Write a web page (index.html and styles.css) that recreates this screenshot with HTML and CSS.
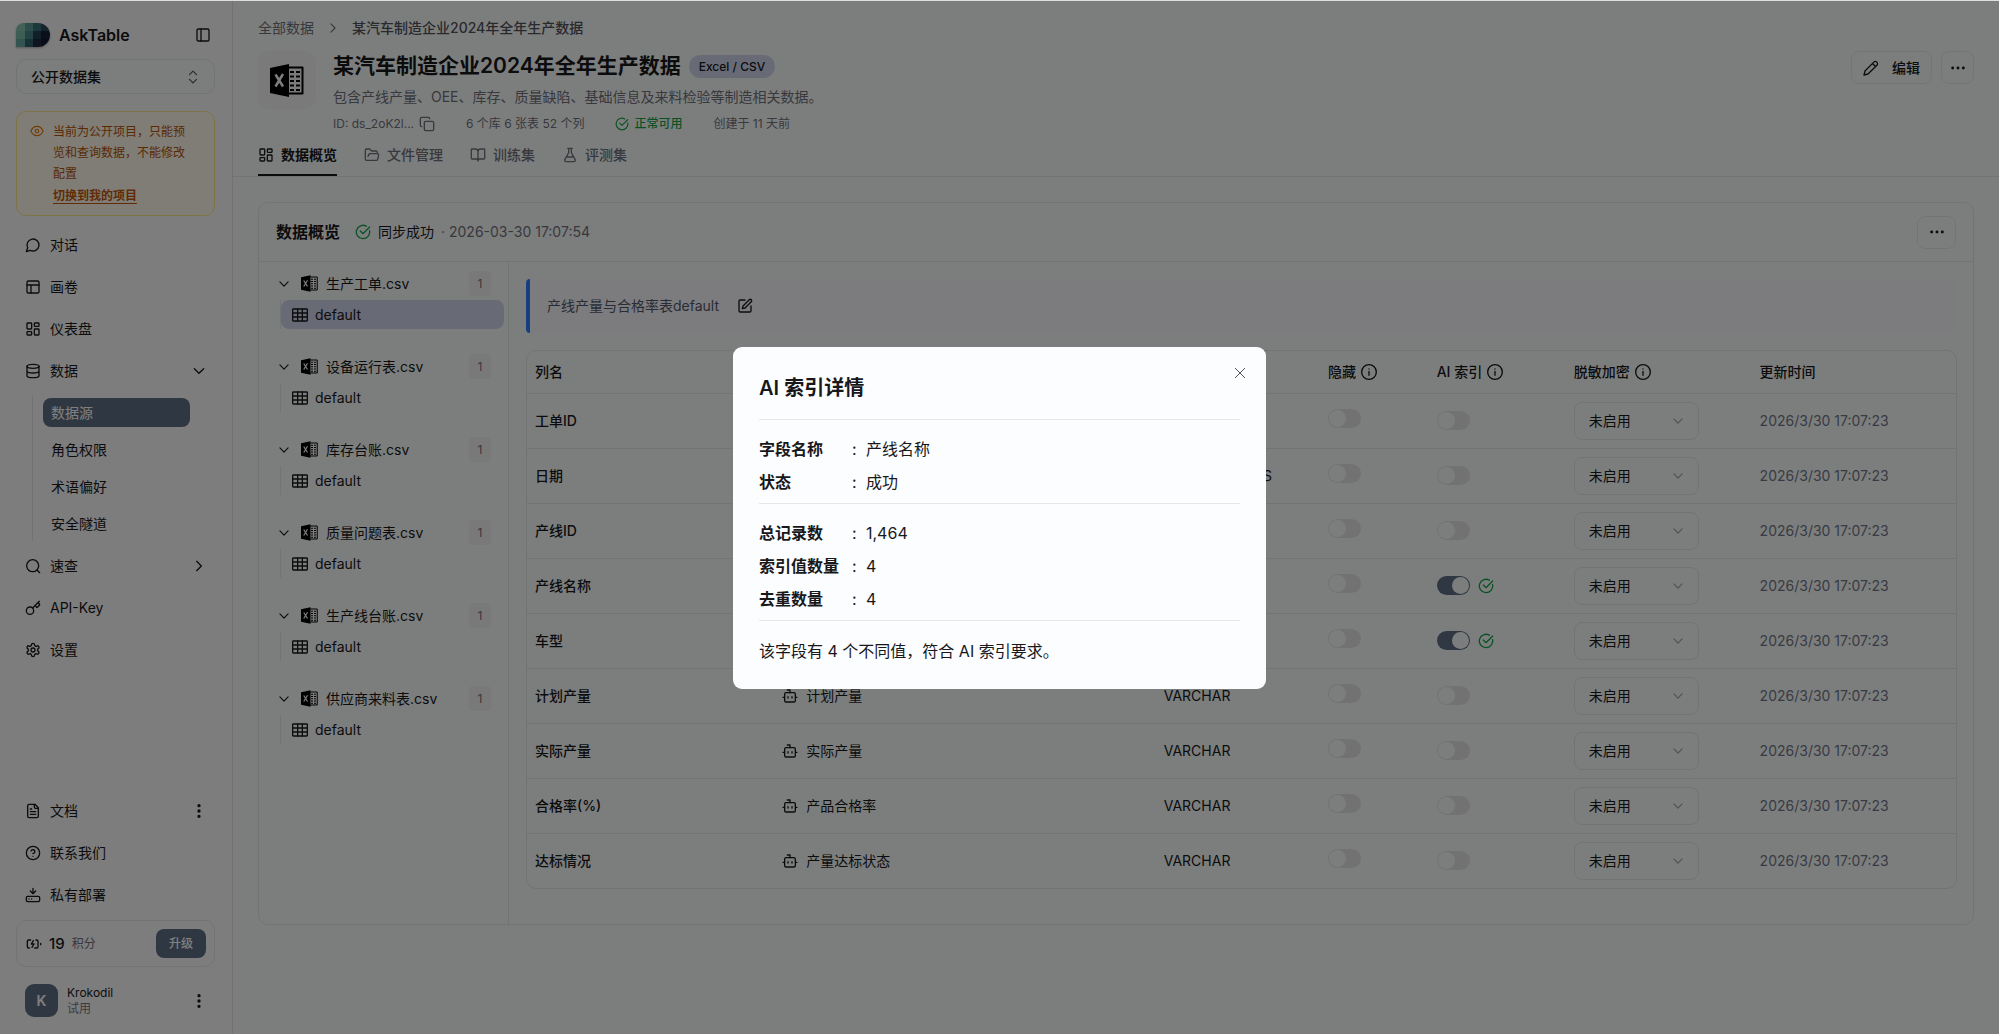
FILE: index.html
```html
<!DOCTYPE html>
<html lang="zh-CN">
<head>
  <meta charset="UTF-8" />
  <meta name="viewport" content="width=device-width, initial-scale=1.0"/>
  <title>AskTable</title>
  <link rel="stylesheet" href="styles.css">
</head>
<body>
  <!-- icons -->
  <svg class="sprite" aria-hidden="true">
    <symbol id="i-panel" viewBox="0 0 24 24"><rect x="3" y="3" width="18" height="18" rx="2"/><path d="M9 3v18"/></symbol>
    <symbol id="i-updown" viewBox="0 0 24 24"><path d="m6 8 6-6 6 6M6 16l6 6 6-6"/></symbol>
    <symbol id="i-eye" viewBox="0 0 24 24"><path d="M1.500 12s3.500-8 10.500-8 10.500 8 10.500 8-3.500 8-10.500 8S1.500 12 1.500 12z"/><circle cx="12" cy="12" r="3"/></symbol>
    <symbol id="i-chat" viewBox="0 0 24 24"><path d="M7.900 20A9 9 0 1 0 4 16.100L2 22z"/></symbol>
    <symbol id="i-canvas" viewBox="0 0 24 24"><rect x="3" y="3" width="18" height="18" rx="2"/><path d="M3 9h18M9 21V9"/></symbol>
    <symbol id="i-dash" viewBox="0 0 24 24"><rect x="3" y="3" width="7" height="9" rx="1"/><rect x="14" y="3" width="7" height="5" rx="1"/><rect x="14" y="12" width="7" height="9" rx="1"/><rect x="3" y="16" width="7" height="5" rx="1"/></symbol>
    <symbol id="i-db" viewBox="0 0 24 24"><ellipse cx="12" cy="5" rx="9" ry="3"/><path d="M3 5v14a9 3 0 0 0 18 0V5M3 12a9 3 0 0 0 18 0"/></symbol>
    <symbol id="i-search" viewBox="0 0 24 24"><circle cx="11.500" cy="11.500" r="9"/><path d="m22 22-4-4"/></symbol>
    <symbol id="i-key" viewBox="0 0 24 24"><circle cx="7.500" cy="16" r="5.500"/><path d="m11.500 12 10-10M15.500 8l1.500 2.500c.6.600 1.400.6 2 0l2.500-2.500c.6-.6.600-1.400 0-2L19.500 4"/></symbol>
    <symbol id="i-gear" viewBox="0 0 24 24"><path d="M12.220 2h-.44a2 2 0 0 0-2 2v.18a2 2 0 0 1-1 1.730l-.43.250a2 2 0 0 1-2 0l-.15-.08a2 2 0 0 0-2.730.730l-.22.380a2 2 0 0 0 .730 2.730l.150.100a2 2 0 0 1 1 1.720v.510a2 2 0 0 1-1 1.740l-.15.090a2 2 0 0 0-.73 2.730l.220.380a2 2 0 0 0 2.730.730l.150-.08a2 2 0 0 1 2 0l.430.250a2 2 0 0 1 1 1.730V20a2 2 0 0 0 2 2h.440a2 2 0 0 0 2-2v-.18a2 2 0 0 1 1-1.730l.430-.25a2 2 0 0 1 2 0l.150.080a2 2 0 0 0 2.730-.73l.220-.39a2 2 0 0 0-.73-2.730l-.15-.08a2 2 0 0 1-1-1.740v-.5a2 2 0 0 1 1-1.740l.150-.09a2 2 0 0 0 .730-2.730l-.22-.38a2 2 0 0 0-2.730-.73l-.15.080a2 2 0 0 1-2 0l-.43-.25a2 2 0 0 1-1-1.730V4a2 2 0 0 0-2-2z"/><circle cx="12" cy="12" r="3"/></symbol>
    <symbol id="i-doc" viewBox="0 0 24 24"><path d="M15 2H6a2 2 0 0 0-2 2v16a2 2 0 0 0 2 2h12a2 2 0 0 0 2-2V7z"/><path d="M14 2v4a2 2 0 0 0 2 2h4M10 9H8M16 13H8M16 17H8"/></symbol>
    <symbol id="i-help" viewBox="0 0 24 24"><circle cx="12" cy="12" r="10"/><path d="M9.100 9a3 3 0 0 1 5.800 1c0 2-3 3-3 3M12 17h.01"/></symbol>
    <symbol id="i-deploy" viewBox="0 0 24 24"><path d="M12 2v8m4-4-4 4-4-4"/><rect x="2" y="14" width="20" height="8" rx="2"/><path d="M6 18h.01M10 18h.01"/></symbol>
    <symbol id="i-battery" viewBox="0 0 24 24"><path d="m11 7-3 5h4l-3 5M14.900 6H16a2 2 0 0 1 2 2v8a2 2 0 0 1-2 2h-2.900M22 11v2M5.100 18H4a2 2 0 0 1-2-2V8a2 2 0 0 1 2-2h2.900"/></symbol>
    <symbol id="i-down" viewBox="0 0 24 24"><path d="m5 8.500 7 7 7-7"/></symbol>
    <symbol id="i-right" viewBox="0 0 24 24"><path d="m8.500 5 7 7-7 7"/></symbol>
    <symbol id="i-vdots" viewBox="0 0 24 24"><g fill="currentColor"><circle cx="12" cy="4" r="1.500"/><circle cx="12" cy="12" r="1.500"/><circle cx="12" cy="20" r="1.500"/></g></symbol>
    <symbol id="i-hdots" viewBox="0 0 24 24"><g fill="currentColor"><circle cx="4" cy="12" r="1.200"/><circle cx="12" cy="12" r="1.200"/><circle cx="20" cy="12" r="1.200"/></g></symbol>
    <symbol id="i-copy" viewBox="0 0 24 24"><rect x="8" y="8" width="14" height="14" rx="2"/><path d="M4 16c-1.100 0-2-.9-2-2V4c0-1.100.900-2 2-2h10c1.100 0 2 .900 2 2"/></symbol>
    <symbol id="i-ok" viewBox="0 0 24 24"><path d="M21.800 10A10 10 0 1 1 17 3.300"/><path d="m8 10.500 4 4L22 4.500"/></symbol>
    <symbol id="i-folder" viewBox="0 0 24 24"><path d="m6 14 1.450-2.900A2 2 0 0 1 9.240 10H20a2 2 0 0 1 1.940 2.500l-1.550 6a2 2 0 0 1-1.940 1.500H4a2 2 0 0 1-2-2V5c0-1.100.900-2 2-2h3.930a2 2 0 0 1 1.660.900l.820 1.200a2 2 0 0 0 1.660.900H18a2 2 0 0 1 2 2v2"/></symbol>
    <symbol id="i-book" viewBox="0 0 24 24"><path d="M12 7v14M3 18a1 1 0 0 1-1-1V4a1 1 0 0 1 1-1h5a4 4 0 0 1 4 4 4 4 0 0 1 4-4h5a1 1 0 0 1 1 1v13a1 1 0 0 1-1 1h-6a3 3 0 0 0-3 3 3 3 0 0 0-3-3z"/></symbol>
    <symbol id="i-flask" viewBox="0 0 24 24"><path d="M14 2v6a2 2 0 0 0 .245.960l5.510 10.080A2 2 0 0 1 18 22H6a2 2 0 0 1-1.755-2.960l5.510-10.080A2 2 0 0 0 10 8V2M6.500 15h11M8.500 2h7"/></symbol>
    <symbol id="i-pencil" viewBox="0 0 24 24"><path d="M3 16.500 16.200 3.200a3 3 0 0 1 4.600 4.600L7.500 21 1.500 22.500zM14.500 5.500l4 4"/></symbol>
    <symbol id="i-edit" viewBox="0 0 24 24"><path d="M12 3H5a2 2 0 0 0-2 2v14a2 2 0 0 0 2 2h14a2 2 0 0 0 2-2v-7"/><path d="M18.400 2.600a2 2 0 0 1 3 3L12 15l-4 1 1-4z"/></symbol>
    <symbol id="i-table" viewBox="0 0 24 24"><rect x="1" y="3" width="22" height="18" rx="1"/><path d="M1 9h22M1 15h22M8.500 3v18M15.500 3v18"/></symbol>
    <symbol id="i-info" viewBox="0 0 24 24"><circle cx="12" cy="12" r="11"/><path d="M12 17v-6M12 7.500h.01"/></symbol>
    <symbol id="i-bot" viewBox="0 0 24 24"><path d="M12 7V3H8"/><rect x="4" y="7" width="16" height="14" rx="2"/><path d="M1.500 14h2M20.500 14h2M15 13v2M9 13v2"/></symbol>
    <symbol id="i-close" viewBox="0 0 24 24"><path d="M5 5l14 14M19 5 5 19"/></symbol>
    <symbol id="i-excel" viewBox="0 0 34 33"><path d="M0 4 19 0v33L0 29z" fill="currentColor" stroke="none"/><path d="M19 3.500h13.500v26H19" stroke-width="2"/><path d="M20 8h4M26 8h4M20 12.500h4M26 12.500h4M20 17h4M26 17h4M20 21.500h4M26 21.500h4M20 26h4M26 26h4" stroke-width="2" stroke-linecap="butt"/><path class="x" d="m5.500 10.500 7.500 12M13 10l-7.500 12.500" stroke-width="2.500" stroke-linecap="butt"/></symbol>
  </svg>

  <div class="app">
    <aside class="sidebar">
      <div class="brand">
        <svg class="logo" viewBox="0 0 34 24" aria-hidden="true">
          <clipPath id="logo-clip"><path d="M8 0h14a12 12 0 0 1 0 24H0V8a8 8 0 0 1 8-8z"/></clipPath>
          <g clip-path="url(#logo-clip)">
            <path fill="#86c2a8" d="M0 0h9v8H0z"/><path fill="#5a9a98" d="M9 0h8v8H9z"/><path fill="#3a7078" d="M17 0h8v8h-8z"/><path fill="#2a465a" d="M25 0h9v8h-9z"/>
            <path fill="#79bda6" d="M0 8h9v8H0z"/><path fill="#47878b" d="M9 8h8v8H9z"/><path fill="#233f55" d="M17 8h8v8h-8z"/><path fill="#161f38" d="M25 8h9v8h-9z"/>
            <path fill="#67a89e" d="M0 16h9v8H0z"/><path fill="#34616e" d="M9 16h8v8H9z"/><path fill="#1c2b42" d="M17 16h8v8h-8z"/><path fill="#131a33" d="M25 16h9v8h-9z"/>
          </g>
        </svg>
        <span class="brand-name">AskTable</span>
        <button class="icon-btn" aria-label="收起侧栏"><svg class="icon"><use href="#i-panel"/></svg></button>
      </div>

      <button class="project"><span>公开数据集</span><svg class="icon"><use href="#i-updown"/></svg></button>

      <div class="notice">
        <svg class="icon"><use href="#i-eye"/></svg>
        <div>
          <p>当前为公开项目，只能预览和查询数据，不能修改配置</p>
          <a href="#">切换到我的项目</a>
        </div>
      </div>

      <nav class="nav">
        <a href="#"><svg class="icon"><use href="#i-chat"/></svg><span>对话</span></a>
        <a href="#"><svg class="icon"><use href="#i-canvas"/></svg><span>画卷</span></a>
        <a href="#"><svg class="icon"><use href="#i-dash"/></svg><span>仪表盘</span></a>
        <a href="#"><svg class="icon"><use href="#i-db"/></svg><span>数据</span><svg class="icon"><use href="#i-down"/></svg></a>
        <div class="subnav">
          <a href="#" class="active">数据源</a>
          <a href="#">角色权限</a>
          <a href="#">术语偏好</a>
          <a href="#">安全隧道</a>
        </div>
        <a href="#"><svg class="icon"><use href="#i-search"/></svg><span>速查</span><svg class="icon"><use href="#i-right"/></svg></a>
        <a href="#"><svg class="icon"><use href="#i-key"/></svg><span>API-Key</span></a>
        <a href="#"><svg class="icon"><use href="#i-gear"/></svg><span>设置</span></a>
      </nav>

      <nav class="nav nav-bottom">
        <a href="#"><svg class="icon"><use href="#i-doc"/></svg><span>文档</span><svg class="icon"><use href="#i-vdots"/></svg></a>
        <a href="#"><svg class="icon"><use href="#i-help"/></svg><span>联系我们</span></a>
        <a href="#"><svg class="icon"><use href="#i-deploy"/></svg><span>私有部署</span></a>
      </nav>

      <div class="credits">
        <svg class="icon"><use href="#i-battery"/></svg>
        <strong>19</strong>
        <span>积分</span>
        <button>升级</button>
      </div>

      <div class="user">
        <div class="avatar">K</div>
        <div class="user-info"><div>Krokodil</div><div class="plan">试用</div></div>
        <button class="icon-btn" aria-label="账户菜单"><svg class="icon"><use href="#i-vdots"/></svg></button>
      </div>
    </aside>

    <main class="main">
      <header class="header">
        <div class="breadcrumb">
          <a href="#">全部数据</a>
          <svg class="icon"><use href="#i-right"/></svg>
          <b>某汽车制造企业2024年全年生产数据</b>
        </div>

        <div class="source">
          <div class="source-icon"><svg><use href="#i-excel"/></svg></div>
          <div class="source-info">
            <div class="source-title">
              <h1>某汽车制造企业2024年全年生产数据</h1>
              <span class="tag">Excel / CSV</span>
            </div>
            <p class="desc">包含产线产量、OEE、库存、质量缺陷、基础信息及来料检验等制造相关数据。</p>
            <div class="meta">
              <span class="meta-id">ID: ds_2oK2l... <svg class="icon"><use href="#i-copy"/></svg></span>
              <span>6 个库 6 张表 52 个列</span>
              <span class="ok"><svg class="icon"><use href="#i-ok"/></svg>正常可用</span>
              <span>创建于 11 天前</span>
            </div>
          </div>
          <div class="actions">
            <button class="btn"><svg class="icon"><use href="#i-pencil"/></svg>编辑</button>
            <button class="btn square" aria-label="更多"><svg class="icon"><use href="#i-hdots"/></svg></button>
          </div>
        </div>

        <nav class="tabs">
          <a href="#" class="active"><svg class="icon"><use href="#i-dash"/></svg>数据概览</a>
          <a href="#"><svg class="icon"><use href="#i-folder"/></svg>文件管理</a>
          <a href="#"><svg class="icon"><use href="#i-book"/></svg>训练集</a>
          <a href="#"><svg class="icon"><use href="#i-flask"/></svg>评测集</a>
        </nav>
      </header>

      <section class="card">
        <div class="card-head">
          <h2>数据概览</h2>
          <svg class="icon ok"><use href="#i-ok"/></svg>
          <span>同步成功</span>
          <span class="muted">· 2026-03-30 17:07:54</span>
          <button class="btn wide" aria-label="更多"><svg class="icon"><use href="#i-hdots"/></svg></button>
        </div>

        <div class="card-body">
          <div class="tree" id="tree"></div>

          <div class="content">
            <div class="note">
              <span>产线产量与合格率表default</span>
              <button class="icon-btn" aria-label="编辑描述"><svg class="icon"><use href="#i-edit"/></svg></button>
            </div>

            <div class="table-wrap">
              <table>
                <colgroup>
                  <col class="c-name"><col class="c-desc"><col class="c-type"><col class="c-hide"><col class="c-index"><col class="c-mask"><col class="c-time">
                </colgroup>
                <thead>
                  <tr>
                    <th>列名</th>
                    <th></th>
                    <th></th>
                    <th>隐藏<svg class="icon"><use href="#i-info"/></svg></th>
                    <th>AI 索引<svg class="icon"><use href="#i-info"/></svg></th>
                    <th>脱敏加密<svg class="icon"><use href="#i-info"/></svg></th>
                    <th>更新时间</th>
                  </tr>
                </thead>
                <tbody id="rows"></tbody>
              </table>
            </div>
          </div>
        </div>
      </section>
    </main>
  </div>

  <div class="overlay">
    <div class="modal" role="dialog" aria-modal="true" aria-labelledby="modal-title">
      <button class="close" aria-label="关闭"><svg class="icon"><use href="#i-close"/></svg></button>
      <h3 id="modal-title">AI 索引详情</h3>
      <dl>
        <dt>字段名称</dt><dd>产线名称</dd>
        <dt>状态</dt><dd>成功</dd>
      </dl>
      <dl>
        <dt>总记录数</dt><dd>1,464</dd>
        <dt>索引值数量</dt><dd>4</dd>
        <dt>去重数量</dt><dd>4</dd>
      </dl>
      <p>该字段有 4 个不同值，符合 AI 索引要求。</p>
    </div>
  </div>

  <script>
    const files = ['生产工单.csv', '设备运行表.csv', '库存台账.csv', '质量问题表.csv', '生产线台账.csv', '供应商来料表.csv'];

    const columns = [
      { name: '工单ID', type: 'VARCHAR' },
      { name: '日期', type: 'TIMESTAMP_NS' },
      { name: '产线ID', type: 'VARCHAR' },
      { name: '产线名称', type: 'VARCHAR', indexed: true },
      { name: '车型', type: 'VARCHAR', indexed: true },
      { name: '计划产量', desc: '计划产量', type: 'VARCHAR' },
      { name: '实际产量', desc: '实际产量', type: 'VARCHAR' },
      { name: '合格率(%)', desc: '产品合格率', type: 'VARCHAR' },
      { name: '达标情况', desc: '产量达标状态', type: 'VARCHAR' }
    ];

    const icon = (name, cls = '') => `<svg class="icon ${cls}"><use href="#i-${name}"/></svg>`;

    document.getElementById('tree').innerHTML = files.map((file, i) => `
      <div class="group">
        <div class="file">${icon('down', 'small')}${icon('excel', 'excel')}<span>${file}</span><em>1</em></div>
        <div class="branch"><a href="#" class="${i === 0 ? 'selected' : ''}">${icon('table')}default</a></div>
      </div>`).join('');

    document.getElementById('rows').innerHTML = columns.map(col => `
      <tr>
        <td class="name">${col.name}</td>
        <td>${col.desc ? `<div class="cell">${icon('bot')}${col.desc}</div>` : ''}</td>
        <td>${col.type}</td>
        <td class="hide-cell"><input type="checkbox" role="switch" class="switch" aria-label="隐藏 ${col.name}"></td>
        <td><div class="cell"><input type="checkbox" role="switch" class="switch" aria-label="AI 索引 ${col.name}" ${col.indexed ? 'checked' : ''}>${col.indexed ? icon('ok', 'ok') : ''}</div></td>
        <td><div class="select"><select aria-label="脱敏加密 ${col.name}"><option>未启用</option></select>${icon('down')}</div></td>
        <td class="time">2026/3/30 17:07:23</td>
      </tr>`).join('');
  </script>
</body>
</html>
```
FILE: styles.css
```css
* {
  box-sizing: border-box;
  margin: 0;
  padding: 0;
}

body {
  font-family: Inter, "Noto Sans CJK SC", sans-serif;
  font-size: 14px;
  line-height: 20px;
  color: #18181b;
  background: #f9fdfb;
  border-top: 1px solid #dedede;
}

a {
  color: inherit;
  text-decoration: none;
}

button, select {
  font: inherit;
  color: inherit;
  background: none;
  border: none;
  cursor: pointer;
}

.sprite {
  position: absolute;
  width: 0;
  height: 0;
}

.icon {
  width: 16px;
  height: 16px;
  flex: none;
}

svg {
  display: block;
  fill: none;
  stroke: currentColor;
  stroke-width: 2;
  stroke-linecap: round;
  stroke-linejoin: round;
}

.logo {
  stroke: none;
}

.x {
  stroke: #fafafa;
}

.icon-btn {
  display: flex;
}

.app {
  display: grid;
  grid-template-columns: 233px minmax(0, 1fr);
  min-height: calc(100vh - 1px);
}

/* sidebar */
.sidebar {
  display: flex;
  flex-direction: column;
  padding: 16px 17px 17px 16px;
  background: #fbfbfb;
  border-right: 1px solid #e4e4e7;
}

.brand {
  display: flex;
  align-items: center;
  gap: 9px;
  height: 35px;
  padding-right: 4px;
}

.logo {
  width: 34px;
  height: 24px;
  filter: drop-shadow(0 1px 1px rgba(0,0,0,0.3));
}

.brand-name {
  flex: 1;
  font-size: 16px;
  font-weight: 600;
}

.project {
  display: flex;
  align-items: center;
  justify-content: space-between;
  height: 35px;
  margin-top: 7px;
  padding: 0 13px 0 14px;
  border: 1px solid #e4e7ea;
  border-radius: 10px;
  background: #f9fdfb;
  font-weight: 500;
}

.project .icon {
  height: 14px;
  color: #52525b;
}

.notice {
  display: flex;
  gap: 9px;
  margin-top: 17px;
  padding: 9px 20px 8px 13px;
  border: 1px solid #fde68a;
  border-radius: 10px;
  background: #fffaeb;
  font-size: 12px;
  color: #b45309;
}

.notice .icon {
  width: 14px;
  margin-top: 2px;
  color: #e07b0c;
}

.notice p {
  line-height: 21px;
}

.notice a {
  display: block;
  margin-top: 1px;
  line-height: 22px;
  font-weight: 600;
  text-decoration: underline;
  text-underline-offset: 3px;
  color: #c2560a;
}

.nav {
  display: flex;
  flex-direction: column;
  margin-top: 8px;
}

.nav > a {
  display: flex;
  align-items: center;
  gap: 9px;
  height: 42px;
  padding: 0 8px 0 9px;
}

.nav > a span {
  flex: 1;
}

.subnav {
  display: flex;
  flex-direction: column;
  gap: 8px;
  margin: 4px 25px 4px 16px;
  padding: 2px 0 3px 10px;
  border-left: 1px solid #e4e4e7;
}

.subnav a {
  padding: 0 8px;
  line-height: 29px;
  border-radius: 8px;
}

.subnav .active {
  background: #5f7185;
  color: #fff;
}

.nav-bottom {
  margin-top: auto;
}

.credits {
  display: flex;
  align-items: center;
  gap: 7px;
  height: 47px;
  margin-top: 4px;
  padding: 0 8px 0 9px;
  border: 1px solid #e8e8ea;
  border-radius: 10px;
}

.credits strong {
  font-size: 15px;
  font-weight: 500;
}

.credits span {
  flex: 1;
  font-size: 12px;
  color: #71717a;
}

.credits button {
  width: 50px;
  height: 29px;
  border-radius: 8px;
  background: #5f7185;
  color: #fff;
  font-size: 12px;
  font-weight: 500;
}

.user {
  display: flex;
  align-items: center;
  gap: 9px;
  margin-top: 17px;
  padding: 0 8px 0 9px;
}

.avatar {
  width: 33px;
  line-height: 33px;
  border-radius: 9px;
  background: #5f7185;
  color: #fff;
  font-weight: 600;
  text-align: center;
}

.user-info {
  flex: 1;
  font-size: 12px;
  line-height: 16px;
}

.plan {
  color: #71768a;
}

/* page header */
.header {
  padding: 16px 25px 0;
  border-bottom: 1px solid #e4e6e7;
}

.breadcrumb {
  display: flex;
  align-items: center;
  gap: 12px;
  line-height: 21px;
  color: #71717a;
}

.breadcrumb .icon {
  width: 14px;
}

.breadcrumb b {
  font-weight: 500;
  color: #52525b;
}

.source {
  display: flex;
  align-items: flex-start;
  margin-top: 13px;
}

.source-icon {
  display: grid;
  place-items: center;
  width: 58px;
  height: 58px;
  margin-right: 17px;
  border-radius: 10px;
  background: #f5f4f5;
  color: #000;
}

.source-icon svg {
  width: 34px;
  height: 33px;
}

.source-info {
  flex: 1;
}

.source-title {
  display: flex;
  align-items: center;
  gap: 8px;
}

h1 {
  font-size: 21px;
  line-height: 30px;
  font-weight: 600;
}

.tag {
  padding: 0 10px;
  line-height: 23px;
  border-radius: 12px;
  background: #d0d7ec;
  font-size: 12px;
  font-weight: 500;
}

.desc {
  margin-top: 5px;
  line-height: 22px;
  color: #71717a;
}

.meta {
  display: flex;
  gap: 31px;
  margin-top: 6px;
  font-size: 12px;
  color: #71717a;
}

.meta span {
  display: flex;
  align-items: center;
  gap: 5px;
}

.meta .ok {
  font-weight: 500;
}

.meta .ok .icon {
  width: 14px;
}

.ok {
  color: #16a34a !important;
}

.actions {
  display: flex;
  gap: 9px;
}

.btn {
  display: flex;
  align-items: center;
  gap: 13px;
  height: 33px;
  padding: 0 11px;
  border: 1px solid #e8e8ea;
  border-radius: 8px;
  font-weight: 500;
}

.square, .wide {
  justify-content: center;
  width: 33px;
  padding: 0;
}

.tabs {
  display: flex;
  gap: 27px;
}

.tabs a {
  display: flex;
  align-items: center;
  gap: 7px;
  height: 42px;
  padding-top: 2px;
  border-bottom: 2px solid transparent;
  font-weight: 500;
  color: #71717a;
}

.tabs .active {
  color: #18181b;
  font-weight: 600;
  border-color: #18181b;
}

/* overview card */
.card {
  margin: 25px;
  border: 1px solid #e4e6e7;
  border-radius: 10px;
}

.card-head {
  display: flex;
  align-items: center;
  gap: 7px;
  height: 59px;
  padding: 0 17px;
  border-bottom: 1px solid #e4e6e7;
}

h2 {
  margin-right: 8px;
  font-size: 16px;
  font-weight: 600;
}

.muted {
  color: #71717a;
}

.wide {
  width: 39px;
  margin-left: auto;
}

.card-body {
  display: flex;
}

.tree {
  width: 250px;
  padding: 9px 4px 0 17px;
  border-right: 1px solid #e4e6e7;
}

.group {
  margin-bottom: 25px;
}

.file {
  display: flex;
  align-items: center;
  height: 25px;
  padding-right: 13px;
}

.file .small {
  width: 16px;
  height: 14px;
  margin-right: 9px;
}

.file .excel {
  width: 17px;
  height: 17px;
  margin-right: 8px;
  color: #000;
}

.file em {
  width: 22px;
  margin-left: auto;
  border-radius: 4px;
  background: #f4f3f4;
  color: #71717a;
  font-size: 12px;
  line-height: 25px;
  font-style: normal;
  text-align: center;
}

.branch {
  margin: 4px 0 0 4px;
  border-left: 1px solid #e4e6e7;
}

.branch a {
  display: flex;
  align-items: center;
  gap: 7px;
  padding-left: 11px;
  line-height: 29px;
  border-radius: 8px;
}

.branch .selected {
  background: #d0d7ec;
}

.content {
  flex: 1;
  min-width: 0;
  padding: 17px 16px 35px 17px;
}

.note {
  display: flex;
  align-items: center;
  gap: 18px;
  height: 54px;
  padding: 0 17px;
  border-left: 4px solid #2b7fff;
  border-radius: 4px;
  background: #f8f9fd;
  color: #52586a;
}

.note .icon-btn {
  color: #18181b;
}

.table-wrap {
  margin-top: 17px;
  border: 1px solid #e4e6e7;
  border-radius: 10px;
}

table {
  width: 100%;
  table-layout: fixed;
  border-collapse: collapse;
}

.c-name { width: 17.3%; }
.c-desc { width: 26.7%; }
.c-type { width: 11.5%; }
.c-hide { width: 7.6%; }
.c-index { width: 9.6%; }
.c-mask { width: 13%; }

th, td {
  padding: 0 8px;
  text-align: left;
  vertical-align: middle;
}

th {
  height: 42px;
  font-weight: 500;
}

th .icon {
  display: inline-block;
  margin-left: 5px;
  vertical-align: -3px;
}

td {
  height: 55px;
  border-top: 1px solid #e4e6e7;
}

.name {
  font-weight: 500;
}

.time {
  color: #71768a;
}

.cell {
  display: flex;
  align-items: center;
  gap: 8px;
}

.hide-cell {
  padding-bottom: 4px;
}

.switch {
  appearance: none;
  display: block;
  width: 33px;
  height: 19px;
  padding: 1px;
  border-radius: 10px;
  background: #e6e4e5;
  cursor: pointer;
}

.switch::before {
  content: "";
  display: block;
  width: 17px;
  height: 17px;
  border-radius: 50%;
  background: #f9fdfb;
}

.switch:checked {
  background: #5f7185;
}

.switch:checked::before {
  margin-left: auto;
}

.select {
  display: grid;
  align-items: center;
  width: 125px;
}

.select select {
  grid-area: 1 / 1;
  appearance: none;
  height: 38px;
  padding: 0 14px;
  border: 1px solid #e4e6e7;
  border-radius: 8px;
}

.select .icon {
  grid-area: 1 / 1;
  justify-self: end;
  width: 14px;
  margin-right: 14px;
  color: #a1a1aa;
  pointer-events: none;
}

/* dialog */
.overlay {
  position: fixed;
  inset: 1px 0 0;
  display: grid;
  place-items: center;
  background: rgba(0,0,0,0.5);
}

.modal {
  position: relative;
  width: 533px;
  padding: 26px;
  border-radius: 9px;
  background: #fcfdff;
  font-size: 16px;
}

.modal h3 {
  padding-bottom: 16px;
  border-bottom: 1px solid #e4e6e7;
  font-size: 20px;
  line-height: 30px;
  font-weight: 600;
}

.modal dl {
  display: grid;
  grid-template-columns: 93px 1fr;
  padding: 13px 0 4px;
  border-bottom: 1px solid #e4e6e7;
  line-height: 33px;
}

.modal dt {
  font-weight: 600;
}

.modal dd::before {
  content: ":";
  display: inline-block;
  width: 14px;
}

.modal p {
  padding-top: 18px;
  line-height: 24px;
}

.close {
  position: absolute;
  top: 18px;
  right: 18px;
  color: #52525b;
}

.close .icon {
  stroke-width: 1.5;
}
```
